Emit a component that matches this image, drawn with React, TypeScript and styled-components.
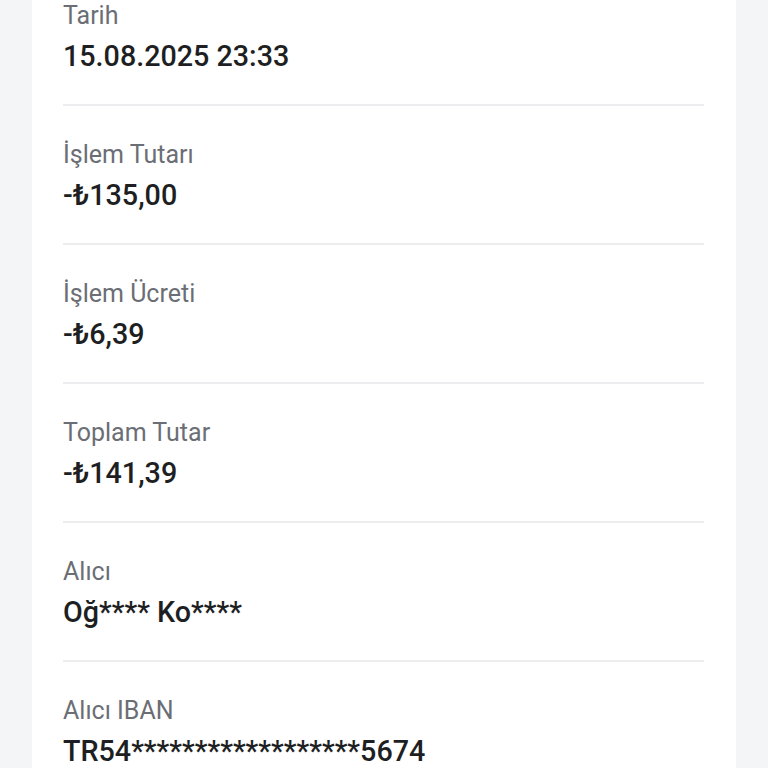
import React from "react";
import styled, { createGlobalStyle } from "styled-components";

const Global = createGlobalStyle`
  html, body { margin: 0; padding: 0; background: #f4f5f7; overflow: hidden; }
  body { font-family: Roboto, "Noto Sans", "Liberation Sans", sans-serif; }
`;

const Page = styled.div`
  width: 768px;
  height: 768px;
  overflow: hidden;
  background: #f4f5f7;
  display: flex;
  justify-content: flex-start;
  padding-left: 32px;
  box-sizing: border-box;
`;

const Card = styled.div`
  width: 704px;
  background: #ffffff;
  padding: 0 32px 0 31px;
  box-sizing: border-box;
  margin-top: -33px;
  align-self: flex-start;
`;

const Row = styled.div`
  display: flex;
  flex-direction: column;
  gap: 6px;
  padding: 33px 0 30px;
  border-bottom: 2px solid #ededf0;
`;

const Label = styled.div`
  font-size: 25px;
  line-height: 32px;
  color: #6b6e75;
  font-weight: 400;
`;

const Value = styled.div`
  font-size: 28.7px;
  line-height: 36px;
  color: #1e1f23;
  font-weight: 500;
`;

const items: [string, string][] = [
  ["Tarih", "15.08.2025 23:33"],
  ["İşlem Tutarı", "-₺135,00"],
  ["İşlem Ücreti", "-₺6,39"],
  ["Toplam Tutar", "-₺141,39"],
  ["Alıcı", "Oğ**** Ko****"],
  ["Alıcı IBAN", "TR54******************5674"],
];

export default function App() {
  return (
    <>
      <Global />
      <Page>
        <Card>
          {items.map(([l, v]) => (
            <Row key={l}>
              <Label>{l}</Label>
              <Value>{v}</Value>
            </Row>
          ))}
        </Card>
      </Page>
    </>
  );
}
